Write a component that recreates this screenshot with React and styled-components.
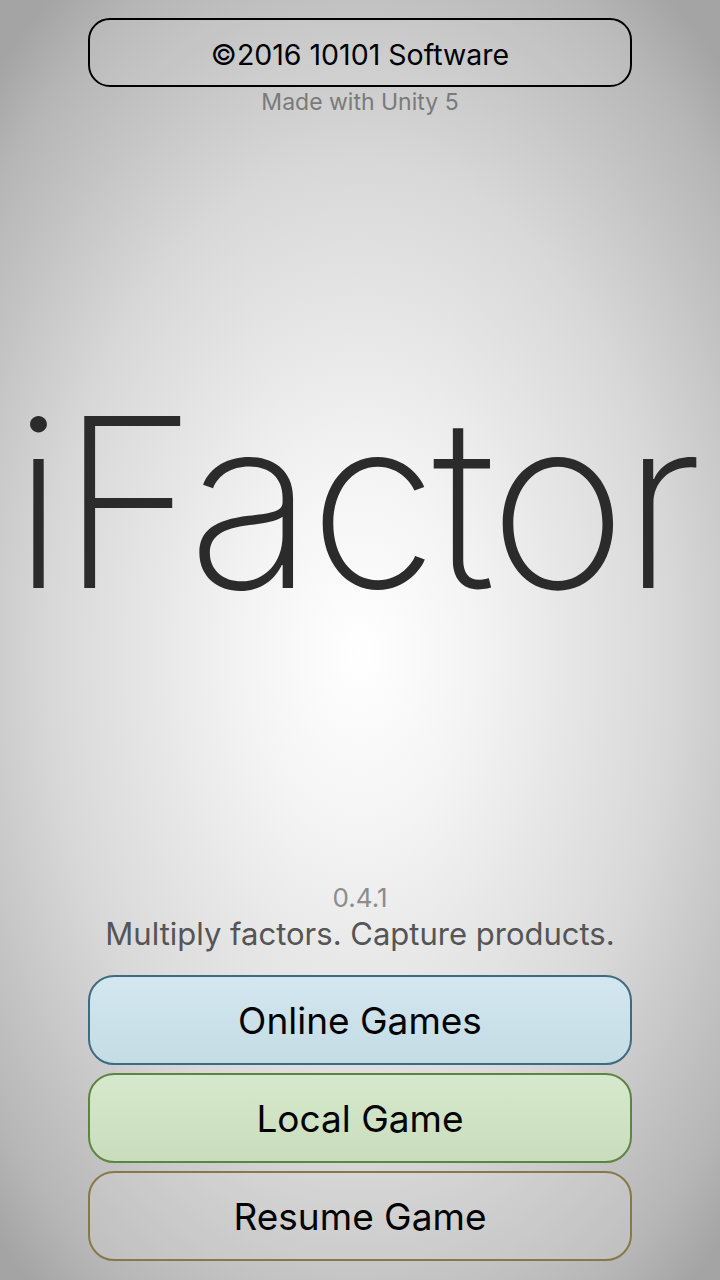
import React from "react";
import styled, { createGlobalStyle } from "styled-components";

const GlobalStyle = createGlobalStyle`
  html, body {
    margin: 0;
    padding: 0;
  }
  body {
    font-family: Inter, "Noto Sans", "Liberation Sans", sans-serif;
    background: #a0a0a0;
  }
`;

const Screen = styled.div`
  width: 720px;
  height: 1280px;
  box-sizing: border-box;
  padding: 18px 88px 19px;
  display: flex;
  flex-direction: column;
  align-items: stretch;
  overflow: hidden;
  background: radial-gradient(
    ellipse 72% 64% at 50% 51%,
    #ffffff 0%,
    #f4f4f4 22%,
    #d8d8d8 60%,
    #b6b6b6 90%,
    #a4a4a4 100%
  );
`;

const PillButton = styled.button`
  display: flex;
  align-items: center;
  justify-content: center;
  width: 100%;
  height: ${(p) => p.h || 90}px;
  margin: 0;
  padding: ${(p) => p.pt || 0}px 0 0;
  box-sizing: border-box;
  border: 2px solid ${(p) => p.edge || "#000"};
  border-radius: ${(p) => p.radius || 26}px;
  background: ${(p) => p.fill || "transparent"};
  color: #000;
  font-family: Inter, "Noto Sans", "Liberation Sans", sans-serif;
  font-size: ${(p) => p.size || 37}px;
  font-weight: 400;
  cursor: pointer;
`;

const Credit = styled.div`
  text-align: center;
  color: #7a7a7a;
  font-size: 23px;
  line-height: 30px;
`;

const TitleArea = styled.div`
  flex: 1;
  display: flex;
  flex-direction: column;
  align-items: center;
`;

const Title = styled.h1`
  margin: 267px -80px 0;
  text-align: center;
  font-family: Inter, "Noto Sans", "Liberation Sans", sans-serif;
  font-weight: 200;
  font-size: 236px;
  line-height: 236px;
  color: #2b2b2b;
  letter-spacing: -5.5px;
  text-indent: -11px;
`;

const Version = styled.div`
  text-align: center;
  color: #8c8c8c;
  font-size: 26px;
  line-height: 32px;
`;

const Tagline = styled.div`
  text-align: center;
  color: #555;
  font-size: 31px;
  line-height: 40px;
  margin-bottom: 21px;
`;

const ButtonStack = styled.div`
  display: flex;
  flex-direction: column;
  gap: 8px;
`;

export default function App() {
  return (
    <>
      <GlobalStyle />
      <Screen>
        <PillButton h={69} radius={22} size={28.5} pt={4} fill="rgba(255,255,255,0.08)">
          ©2016 10101 Software
        </PillButton>
        <Credit>Made with Unity 5</Credit>
        <TitleArea>
          <Title>iFactor</Title>
        </TitleArea>
        <Version>0.4.1</Version>
        <Tagline>Multiply factors. Capture products.</Tagline>
        <ButtonStack>
          <PillButton
            edge="#3f6b80"
            fill="linear-gradient(180deg, #d3e7ef 0%, #c4dce4 100%)"
          >
            Online Games
          </PillButton>
          <PillButton
            edge="#5d8542"
            fill="linear-gradient(180deg, #d6e9cc 0%, #c9dcbc 100%)"
          >
            Local Game
          </PillButton>
          <PillButton edge="#857a45" fill="rgba(220,220,220,0.25)">
            Resume Game
          </PillButton>
        </ButtonStack>
      </Screen>
    </>
  );
}
